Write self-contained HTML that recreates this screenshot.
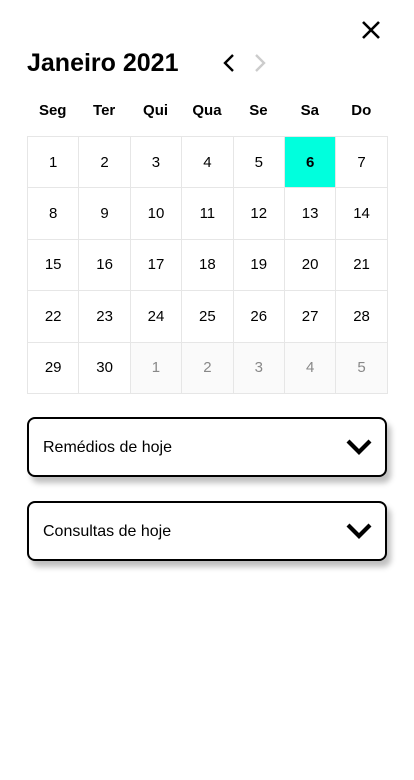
<!DOCTYPE html><html><head><style>
body{margin:0;width:414px;height:780px;background:#fff;font-family:"Liberation Sans",sans-serif;position:relative;overflow:hidden}
.t{position:absolute;left:27px;top:49px;font-size:25px;font-weight:bold;color:#000}
.dh{position:absolute;top:102px;left:27px;width:360px;display:flex}
.dh div{flex:1;text-align:center;font-size:15px;font-weight:bold}
table{position:absolute;left:27px;top:136px;border-collapse:collapse}
td{width:50.4px;height:50.4px;border:1px solid #e6e6e6;text-align:center;font-size:15px;padding:0}
td.o{background:#fafafa;color:#888}
td.s{background:#00ffdd;font-weight:bold}
.b{position:absolute;left:27px;width:356px;height:56px;border:2px solid #000;border-radius:8px;box-shadow:4px 6px 6px rgba(0,0,0,.25);background:#fff}
.b span{position:absolute;left:14px;top:20px;font-size:16px}
.b svg{position:absolute;right:12px;top:19px}
</style></head><body>
<svg style="position:absolute;left:361px;top:20px" width="20" height="20"><path d="M2 2L18 18M18 2L2 18" stroke="#000" stroke-width="2.6"/></svg>
<div class="t">Janeiro 2021</div>
<svg style="position:absolute;left:222px;top:53px" width="14" height="20"><path d="M11 2L3 10L11 18" stroke="#000" stroke-width="2.4" fill="none"/></svg>
<svg style="position:absolute;left:253px;top:53px" width="14" height="20"><path d="M3 2L11 10L3 18" stroke="#ccc" stroke-width="2.4" fill="none"/></svg>
<div class="dh"><div>Seg</div><div>Ter</div><div>Qui</div><div>Qua</div><div>Se</div><div>Sa</div><div>Do</div></div>
<table>
<tr><td>1</td><td>2</td><td>3</td><td>4</td><td>5</td><td class="s">6</td><td>7</td></tr>
<tr><td>8</td><td>9</td><td>10</td><td>11</td><td>12</td><td>13</td><td>14</td></tr>
<tr><td>15</td><td>16</td><td>17</td><td>18</td><td>19</td><td>20</td><td>21</td></tr>
<tr><td>22</td><td>23</td><td>24</td><td>25</td><td>26</td><td>27</td><td>28</td></tr>
<tr><td>29</td><td>30</td><td class="o">1</td><td class="o">2</td><td class="o">3</td><td class="o">4</td><td class="o">5</td></tr>
</table>
<div class="b" style="top:417px"><span>Remédios de hoje</span><svg width="28" height="18"><path d="M3 3L14 14L25 3" stroke="#000" stroke-width="4.2" fill="none"/></svg></div>
<div class="b" style="top:501px"><span>Consultas de hoje</span><svg width="28" height="18"><path d="M3 3L14 14L25 3" stroke="#000" stroke-width="4.2" fill="none"/></svg></div>
</body></html>
